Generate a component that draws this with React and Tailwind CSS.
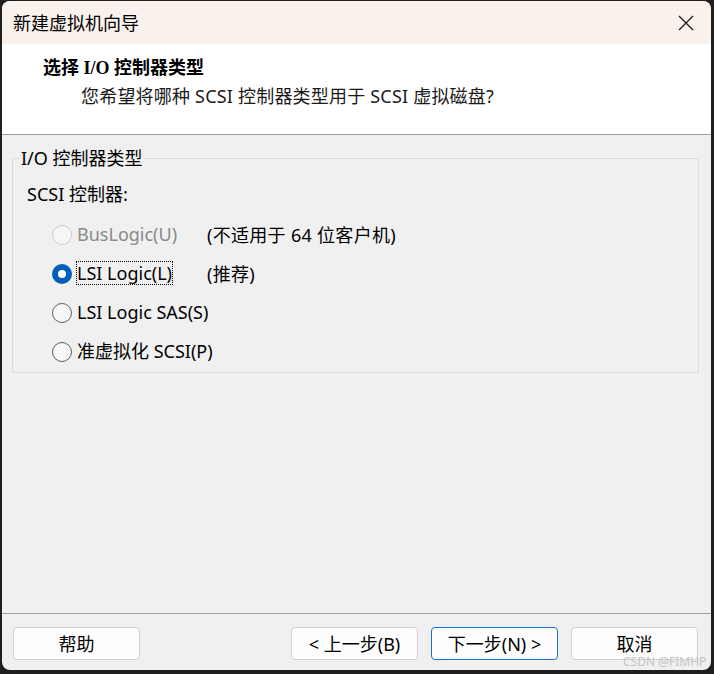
import React from 'react';

const FONT = "font-['Noto_Sans','Noto_Sans_CJK_SC',sans-serif]";

const Radio = ({ checked, disabled }) => {
  if (checked) {
    return (
      <span className="flex h-[20px] w-[20px] shrink-0 items-center justify-center rounded-full bg-[#005fb8]">
        <span className="h-[8px] w-[8px] rounded-full bg-white" />
      </span>
    );
  }
  return (
    <span
      className={
        disabled
          ? 'h-[20px] w-[20px] shrink-0 rounded-full border border-[#cbcbcb] bg-[#f6f6f6]'
          : 'h-[20px] w-[20px] shrink-0 rounded-full border border-[#5c5c5c] bg-[#f7f7f7]'
      }
    />
  );
};

const options = [
  { label: 'BusLogic(U)', note: '(不适用于 64 位客户机)', disabled: true },
  { label: 'LSI Logic(L)', note: '(推荐)', checked: true, focused: true },
  { label: 'LSI Logic SAS(S)' },
  { label: '准虚拟化 SCSI(P)' },
];

const Button = ({ children, primary }) => (
  <button
    type="button"
    className={
      primary
        ? 'h-[33px] w-[127px] rounded-[4px] border border-[#1a73d0] bg-[#fdfdfd] text-[18px] leading-none text-black'
        : 'h-[33px] w-[127px] rounded-[4px] border border-[#d0d0d0] bg-[#fdfdfd] text-[18px] leading-none text-black'
    }
  >
    {children}
  </button>
);

export default function App() {
  return (
    <div className={`h-[674px] w-[714px] bg-[#1f1f1f] pb-[4px] pl-[2px] pr-[3px] pt-[1px] ${FONT}`}>
      <div className="relative flex h-full flex-col overflow-hidden rounded-[8px] bg-[#f0f0f0]">
        {/* title bar */}
        <div className="flex h-[43px] shrink-0 items-center justify-between bg-[#f9f1eb] pl-[11px] pr-[17px]">
          <span className="text-[18px] leading-[24px] text-black">新建虚拟机向导</span>
          <svg width="16" height="16" viewBox="0 0 16 16" className="text-[#1a1a1a]">
            <path d="M1 1 L15 15 M15 1 L1 15" stroke="currentColor" strokeWidth="1.3" fill="none" />
          </svg>
        </div>

        {/* header */}
        <div className="h-[91px] shrink-0 border-b border-[#a0a0a0] bg-white pt-[12px]">
          <div className="pl-[41px] font-['Liberation_Serif','Noto_Sans_CJK_SC',serif] text-[18px] font-bold leading-[24px] text-black">
            选择 I/O 控制器类型
          </div>
          <div className="mt-[4px] whitespace-nowrap pl-[79px] text-[18px] leading-[24px] tracking-[0.2px] text-[#1a1a1a]">
            您希望将哪种 SCSI 控制器类型用于 SCSI 虚拟磁盘?
          </div>
        </div>

        {/* body */}
        <div className="flex-1 pl-[10px] pr-[12px] pt-[11px]">
          <fieldset className="border border-[#dcdcdc] pb-[1px] pl-[14px] pr-[14px]">
            <legend className="ml-[-7px] px-[1px] text-[18px] leading-[24px] text-black">I/O 控制器类型</legend>
            <div className="pt-[12px] text-[18px] leading-[24px] text-black">SCSI 控制器:</div>
            <div className="mt-[9px] flex flex-col">
              {options.map((o) => (
                <div key={o.label} className="flex h-[39px] items-center whitespace-nowrap pl-[25px]">
                  <Radio checked={o.checked} disabled={o.disabled} />
                  <span className="ml-[4px] w-[131px] shrink-0 overflow-visible">
                    <span
                      className={
                        o.focused
                          ? 'inline-block border border-dotted border-black text-[18px] leading-[22px] text-black'
                          : o.disabled
                          ? 'inline-block border border-transparent text-[18px] leading-[22px] text-[#8a8a8a]'
                          : 'inline-block border border-transparent text-[18px] leading-[22px] text-black'
                      }
                    >
                      {o.label}
                    </span>
                  </span>
                  {o.note && <span className="text-[18px] leading-[24px] tracking-[0.3px] text-black">{o.note}</span>}
                </div>
              ))}
            </div>
          </fieldset>
        </div>

        {/* footer */}
        <div className="flex h-[57px] shrink-0 items-start justify-between border-t border-[#a0a0a0] pl-[11px] pr-[13px] pt-[13px]">
          <Button>帮助</Button>
          <div className="flex gap-[13px]">
            <Button>&lt; 上一步(B)</Button>
            <Button primary>下一步(N) &gt;</Button>
            <Button>取消</Button>
          </div>
        </div>

        <span className="absolute left-[621px] top-[654px] text-[12px] leading-[14px] text-[#c4c4c4]">CSDN @FIMHP</span>
      </div>
    </div>
  );
}
